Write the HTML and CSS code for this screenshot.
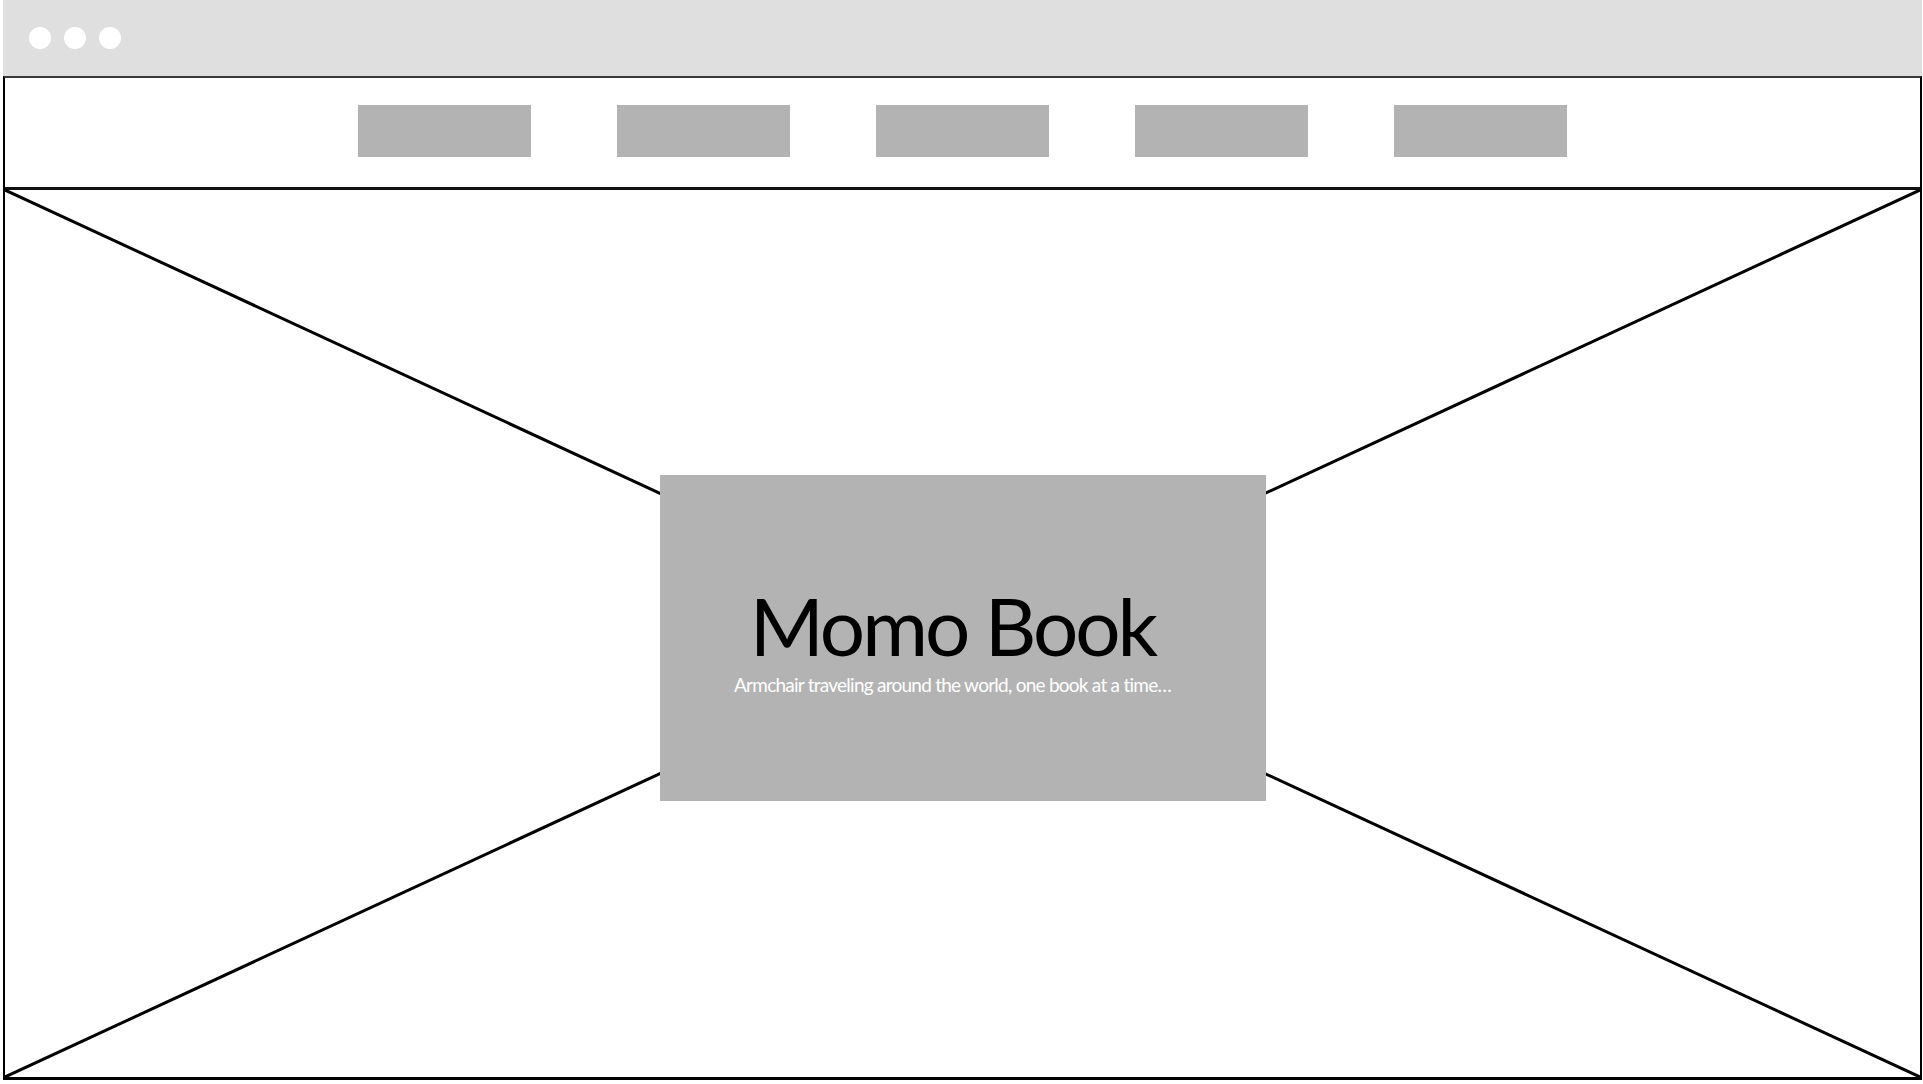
FILE: index.html
```html
<!DOCTYPE html>
<html lang="en">
  <head>
    <meta charset="UTF-8" />
    <meta name="viewport" content="width=device-width, initial-scale=1.0" />
    <title>Momo Book</title>
    <link rel="stylesheet" href="styles.css">
  </head>
  <body>
    <div class="window">
      <!-- 브라우저 상단 바 -->
      <div class="titlebar">
        <span class="dot"></span>
        <span class="dot"></span>
        <span class="dot"></span>
      </div>

      <div class="frame">
        <!-- 메뉴 자리 -->
        <nav class="nav">
          <a class="nav-item" href="#"></a>
          <a class="nav-item" href="#"></a>
          <a class="nav-item" href="#"></a>
          <a class="nav-item" href="#"></a>
          <a class="nav-item" href="#"></a>
        </nav>

        <!-- 메인 이미지 자리 -->
        <section class="hero">
          <svg class="hero-x" viewBox="0 0 100 100" preserveAspectRatio="none">
            <line x1="0" y1="0" x2="100" y2="100" vector-effect="non-scaling-stroke" />
            <line x1="100" y1="0" x2="0" y2="100" vector-effect="non-scaling-stroke" />
          </svg>
          <div class="hero-box">
            <h1 class="hero-title">Momo Book</h1>
            <p class="hero-sub">Armchair traveling around the world, one book at a time…</p>
          </div>
        </section>
      </div>
    </div>
  </body>
</html>
```

FILE: styles.css
```css
* {
  font-family: "Lato", "Open Sans", sans-serif;
  padding: 0;
  margin: 0;
  box-sizing: border-box;
}

body {
  background: #ffffff;
}

.window {
  width: 1919px;
  margin-left: 3px;
}

/* 상단 바 */
.titlebar {
  height: 76px;
  background: #e0dfe0;
  display: flex;
  align-items: center;
  gap: 13px;
  padding-left: 26px;
  padding-bottom: 1px;
}

.dot {
  width: 22px;
  height: 22px;
  border-radius: 50%;
  background: #ffffff;
}

.frame {
  border-left: 2px solid #000;
  border-right: 2px solid #000;
  border-top: 2px solid #3a3a3a;
  border-bottom: 3px solid #000;
}

/* 메뉴 */
.nav {
  height: 112px;
  border-bottom: 3px solid #111;
  display: flex;
  justify-content: center;
  align-items: center;
  gap: 86px;
  padding-bottom: 3px;
}

.nav-item {
  width: 173px;
  height: 52px;
  background: #b3b3b3;
}

/* 메인 */
.hero {
  position: relative;
  height: 887px;
  display: flex;
  justify-content: center;
  align-items: center;
  padding-top: 9px;
}

.hero-x {
  position: absolute;
  top: 0;
  left: 0;
  width: 100%;
  height: 100%;
}

.hero-x line {
  stroke: #000;
  stroke-width: 3px;
}

.hero-box {
  position: relative;
  width: 606px;
  height: 326px;
  background: #b3b3b3;
  padding-top: 110px;
  padding-right: 20px;
  text-align: center;
}

.hero-title {
  font-size: 80px;
  font-weight: normal;
  line-height: 1;
  letter-spacing: -3px;
  color: #000;
}

.hero-sub {
  font-size: 19px;
  line-height: 1.2;
  letter-spacing: -0.75px;
  margin-top: 9px;
  color: #ffffff;
}
```
